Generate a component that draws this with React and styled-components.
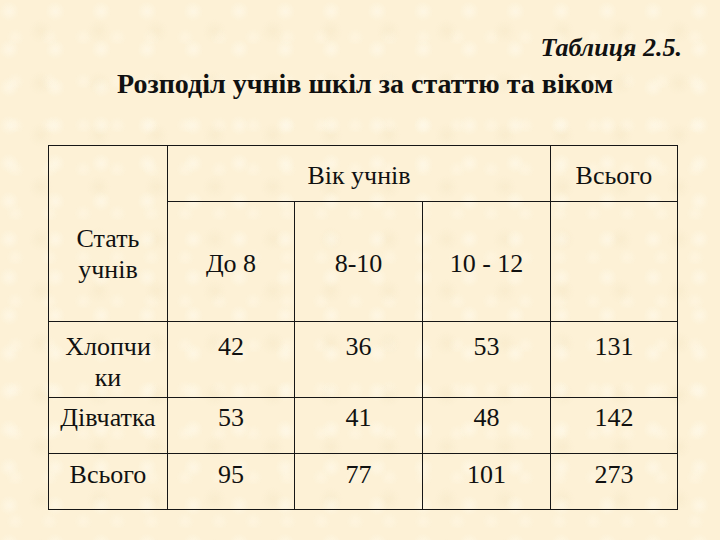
import React from "react";
import styled, { createGlobalStyle } from "styled-components";

const GlobalStyle = createGlobalStyle`
  html, body {
    margin: 0;
    padding: 0;
    font: 16px "Liberation Serif", Tinos, "DejaVu Serif", serif;
  }
`;

const Slide = styled.div`
  width: 720px;
  height: 540px;
  overflow: hidden;
  box-sizing: border-box;
  padding: 30px 0 0 48px;
  font: 26px/31px "Liberation Serif", Tinos, serif;
  color: #111;
  background-color: #fdf1d6;
  background-image:
    radial-gradient(circle at 20% 30%, rgba(255, 251, 238, 0.55) 0, rgba(255, 251, 238, 0) 10px),
    radial-gradient(circle at 70% 60%, rgba(242, 226, 190, 0.3) 0, rgba(242, 226, 190, 0) 12px),
    radial-gradient(circle at 45% 85%, rgba(255, 248, 230, 0.5) 0, rgba(255, 248, 230, 0) 9px);
  background-size: 46px 38px, 58px 52px, 34px 44px;
`;

const Caption = styled.div`
  width: 634px;
  text-align: right;
  font: italic 700 26px/36px "Liberation Serif", Tinos, serif;
`;

const Heading = styled.div`
  width: 634px;
  text-align: center;
  font: 700 28px/36px "Liberation Serif", Tinos, serif;
`;

const Table = styled.table`
  margin-top: 43px;
  border-collapse: collapse;
  table-layout: fixed;
  font: 26px/31px "Liberation Serif", Tinos, serif;
  color: #111;
`;

const Cell = styled.td`
  border: 1.5px solid #161616;
  padding: ${(p) => p.$pad || "0"};
  text-align: center;
  vertical-align: ${(p) => p.$align || "top"};
  height: ${(p) => p.$h}px;
  box-sizing: border-box;
  white-space: nowrap;
  font: 26px/31px "Liberation Serif", Tinos, serif;
`;

const columns = [119, 127, 128, 128, 127];

const body = [
  { name: ["Хлопчи", "ки"], values: [42, 36, 53, 131], h: 76, pad: "9px 0 0" },
  { name: ["Дівчатка"], values: [53, 41, 48, 142], h: 56, pad: "4px 0 0" },
  { name: ["Всього"], values: [95, 77, 101, 273], h: 56, pad: "5px 0 0" },
];

export default function App() {
  return (
    <Slide>
      <GlobalStyle />
      <Caption>Таблиця 2.5.</Caption>
      <Heading>Розподіл учнів шкіл за статтю та віком</Heading>
      <Table>
        <colgroup>
          {columns.map((w, i) => (
            <col key={i} style={{ width: w }} />
          ))}
        </colgroup>
        <tbody>
          <tr>
            <Cell rowSpan={2} $align="bottom" $pad="0 0 36px">
              Стать
              <br />
              учнів
            </Cell>
            <Cell colSpan={3} $h={56} $align="middle" $pad="3px 0 0">
              Вік учнів
            </Cell>
            <Cell $h={56} $align="middle" $pad="3px 0 0">
              Всього
            </Cell>
          </tr>
          <tr>
            <Cell $h={120} $align="middle" $pad="4px 0 0">До 8</Cell>
            <Cell $h={120} $align="middle" $pad="4px 0 0">8-10</Cell>
            <Cell $h={120} $align="middle" $pad="4px 0 0">10 - 12</Cell>
            <Cell $h={120} />
          </tr>
          {body.map((row) => (
            <tr key={row.name.join("")}>
              <Cell $h={row.h} $pad={row.pad}>
                {row.name.map((part, i) => (
                  <React.Fragment key={part}>
                    {i > 0 && <br />}
                    {part}
                  </React.Fragment>
                ))}
              </Cell>
              {row.values.map((v, i) => (
                <Cell key={i} $h={row.h} $pad={row.pad}>
                  {v}
                </Cell>
              ))}
            </tr>
          ))}
        </tbody>
      </Table>
    </Slide>
  );
}
